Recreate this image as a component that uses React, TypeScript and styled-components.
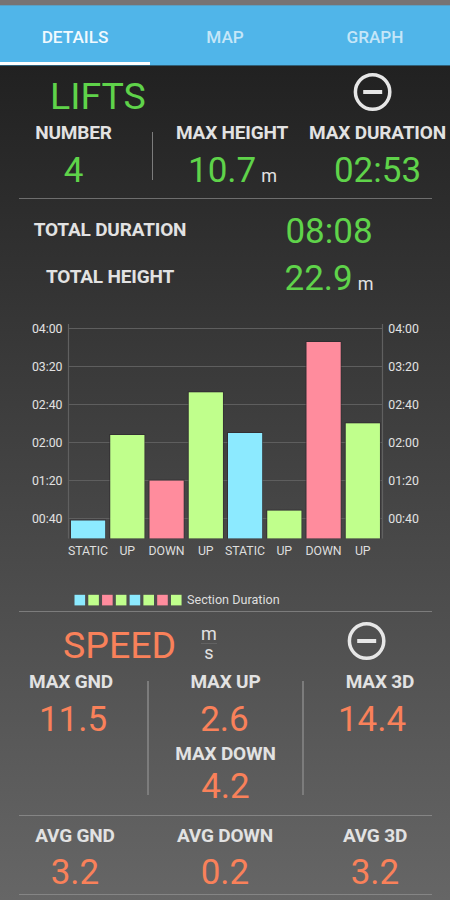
import React from "react";
import styled, { createGlobalStyle } from "styled-components";

const GREEN = "#5fd34a";
const ORANGE = "#f9815a";

const GlobalStyle = createGlobalStyle`
  *, *::before, *::after { box-sizing: border-box; }
  body { margin: 0; background: #666; }
`;

const Screen = styled.main`
  width: 450px;
  height: 900px;
  overflow: hidden;
  display: flex;
  flex-direction: column;
  font-family: Roboto, "Liberation Sans", sans-serif;
  color: #e2e2e2;
  background: linear-gradient(#212121 65px, #666666 900px);
`;

const StatusBar = styled.div`
  flex: none;
  height: 5px;
  background: #777374;
`;

const Tabs = styled.nav`
  flex: none;
  display: grid;
  grid-template-columns: repeat(3, 1fr);
  height: 61px;
  background: #50b5e9;
  border-top: 1px solid #5a9fc4;
  border-bottom: 1px solid #2f5f78;
`;

const Tab = styled.button<{ $active?: boolean }>`
  border: 0;
  border-bottom: 3px solid ${(p) => (p.$active ? "#ffffff" : "transparent")};
  padding: 5px 0 0;
  background: none;
  font: 500 17.2px/20px Roboto, "Liberation Sans", sans-serif;
  color: ${(p) => (p.$active ? "#f0f9fe" : "#c5e6f8")};
`;

const Header = styled.header<{ $height: number }>`
  flex: none;
  display: flex;
  align-items: center;
  height: ${(p) => p.$height}px;
`;

const Title = styled.h1<{ $color: string; $left: number; $width: number; $top: number }>`
  margin: ${(p) => p.$top}px 0 0 ${(p) => p.$left}px;
  width: ${(p) => p.$width}px;
  font-size: 37.5px;
  line-height: 40px;
  font-weight: 400;
  white-space: nowrap;
  color: ${(p) => p.$color};
`;

const Fraction = styled.div`
  width: 18px;
  margin-top: 4px;
  display: flex;
  flex-direction: column;
  align-items: center;
  font-size: 18px;
  line-height: 18px;
`;

const Numerator = styled.span`
  border-bottom: 1px solid #626262;
`;

const CollapseButton = styled.button<{ $right: number; $bottom?: number }>`
  display: flex;
  margin: 0 ${(p) => p.$right}px ${(p) => p.$bottom ?? 0}px auto;
  padding: 0;
  border: 0;
  background: none;
`;

const Stats = styled.section<{ $columns: string }>`
  flex: none;
  display: grid;
  grid-template-columns: ${(p) => p.$columns};
`;

const Stat = styled.div`
  display: flex;
  flex-direction: column;
  align-items: center;
`;

const Label = styled.div<{ $height: number; $shift?: number }>`
  height: ${(p) => p.$height}px;
  line-height: ${(p) => p.$height}px;
  font-size: 19px;
  font-weight: 700;
  white-space: nowrap;
  letter-spacing: -0.17px;
  transform: translateX(${(p) => p.$shift ?? 0}px);
`;

const Value = styled.div<{ $color: string; $height: number; $shift?: number }>`
  height: ${(p) => p.$height}px;
  line-height: ${(p) => p.$height + 2}px;
  font-size: 35px;
  white-space: nowrap;
  color: ${(p) => p.$color};
  transform: translateX(${(p) => p.$shift ?? 0}px);
`;

const Unit = styled.span`
  margin-left: 5px;
  font-size: 18px;
  color: #e2e2e2;
`;

const Divider = styled.div<{ $top: number; $bottom: number }>`
  margin: ${(p) => p.$top}px 0 ${(p) => p.$bottom}px;
  background: #7c7c7c;
`;

const Rule = styled.hr<{ $before?: number; $after?: number; $color?: string }>`
  flex: none;
  width: 413px;
  height: 1px;
  border: 0;
  margin: ${(p) => p.$before ?? 0}px 0 ${(p) => p.$after ?? 0}px 19px;
  background: ${(p) => p.$color ?? "#858585"};
`;

const TotalRow = styled.div`
  flex: none;
  display: grid;
  grid-template-columns: 220px 218px;
  justify-items: center;
  align-items: start;
  height: 47px;
`;

const Chart = styled.svg`
  flex: none;
  display: block;
  font-family: Roboto, "Liberation Sans", sans-serif;
  font-size: 12.3px;
`;

const MinusCircle = () => (
  <svg width="40" height="40" viewBox="0 0 40 40" fill="none">
    <circle cx="19.6" cy="20" r="17.2" stroke="#e6e6e6" strokeWidth="3.5" />
    <path d="M10.2 20h19" stroke="#e6e6e6" strokeWidth="4" />
  </svg>
);

const BLUE = "#8ceaff";
const LIME = "#c0ff8c";
const PINK = "#ff8c9d";

const bars = [
  { label: "STATIC", top: 219.5, color: BLUE },
  { label: "UP", top: 134, color: LIME },
  { label: "DOWN", top: 179.6, color: PINK },
  { label: "UP", top: 91.3, color: LIME },
  { label: "STATIC", top: 132, color: BLUE },
  { label: "UP", top: 209.6, color: LIME },
  { label: "DOWN", top: 41, color: PINK },
  { label: "UP", top: 122.3, color: LIME },
];
const ticks = ["04:00", "03:20", "02:40", "02:00", "01:20", "00:40"];
const BASE = 237.4;

const DurationChart = () => (
  <Chart width="450" height="310" viewBox="0 0 450 310">
    {ticks.map((t, i) => {
      const y = 27.5 + i * 38;
      return (
        <g key={t}>
          <path d={`M68 ${y}H383`} stroke="#5e5e5e" strokeWidth="1.2" />
          <text x="62.5" y={y + 4} textAnchor="end" fill="#e2e2e2">{t}</text>
          <text x="388.3" y={y + 4} fill="#e2e2e2">{t}</text>
        </g>
      );
    })}
    <path d="M68.5 23V237.5M382.5 23V237.5" stroke="#606060" strokeWidth="1.2" />
    {bars.map((b, i) => {
      const x = 71 + i * 39.25;
      return (
        <g key={i}>
          <rect x={x - 1} y={b.top - 1} width="36" height={BASE - b.top + 1} fill="#2b262b" opacity="0.6" />
          <rect x={x} y={b.top} width="34.2" height={BASE - b.top} fill={b.color} />
          <text x={x + 17} y="254" textAnchor="middle" fill="#dedede">{b.label}</text>
          <rect x={74.5 + i * 13.78} y="293.8" width="10.6" height="10.6" fill={b.color} />
        </g>
      );
    })}
    <text x="187" y="303.4" fontSize="12.6" fill="#dedede">Section Duration</text>
  </Chart>
);

export default function App() {
  return (
    <>
      <GlobalStyle />
      <Screen>
        <StatusBar />
        <Tabs>
          <Tab $active>DETAILS</Tab>
          <Tab>MAP</Tab>
          <Tab>GRAPH</Tab>
        </Tabs>

        <Header $height={53}>
          <Title $color={GREEN} $left={50} $width={110} $top={6}>LIFTS</Title>
          <CollapseButton $right={57} $bottom={2} aria-label="Collapse lifts"><MinusCircle /></CollapseButton>
        </Header>
        <Stats $columns="152px 1px 152px 145px">
          <Stat>
            <Label $height={28} $shift={-2.5}>NUMBER</Label>
            <Value $color={GREEN} $height={46} $shift={-2.5}>4</Value>
          </Stat>
          <Divider $top={13} $bottom={13} />
          <Stat>
            <Label $height={28} $shift={3}>MAX HEIGHT</Label>
            <Value $color={GREEN} $height={46} $shift={3.5}>10.7<Unit>m</Unit></Value>
          </Stat>
          <Stat>
            <Label $height={28}>MAX DURATION</Label>
            <Value $color={GREEN} $height={46}>02:53</Value>
          </Stat>
        </Stats>
        <Rule $before={5} $after={8} $color="#6e6e6e" />

        <TotalRow>
          <Label $height={45}>TOTAL DURATION</Label>
          <Value $color={GREEN} $height={47}>08:08</Value>
        </TotalRow>
        <TotalRow>
          <Label $height={45}>TOTAL HEIGHT</Label>
          <Value $color={GREEN} $height={47}>22.9<Unit>m</Unit></Value>
        </TotalRow>
        <DurationChart />
        <Rule $color="#7c7c7c" />

        <Header $height={58}>
          <Title $color={ORANGE} $left={63} $width={137} $top={8}>SPEED</Title>
          <Fraction><Numerator>m</Numerator><span>s</span></Fraction>
          <CollapseButton $right={63} aria-label="Collapse speed"><MinusCircle /></CollapseButton>
        </Header>
        <Stats $columns="147px 2px 153px 2px 146px">
          <Stat>
            <Label $height={24} $shift={-2.5}>MAX GND</Label>
            <Value $color={ORANGE} $height={50} $shift={-0.5}>11.5</Value>
          </Stat>
          <Divider $top={11} $bottom={13} />
          <Stat>
            <Label $height={24}>MAX UP</Label>
            <Value $color={ORANGE} $height={50} $shift={-1}>2.6</Value>
            <Label $height={20}>MAX DOWN</Label>
            <Value $color={ORANGE} $height={44}>4.2</Value>
          </Stat>
          <Divider $top={11} $bottom={13} />
          <Stat>
            <Label $height={24} $shift={3}>MAX 3D</Label>
            <Value $color={ORANGE} $height={50} $shift={-5}>14.4</Value>
          </Stat>
        </Stats>
        <Rule $before={7} />
        <Stats $columns="repeat(3, 1fr)">
          <Stat>
            <Label $height={39}>AVG GND</Label>
            <Value $color={ORANGE} $height={34}>3.2</Value>
          </Stat>
          <Stat>
            <Label $height={39}>AVG DOWN</Label>
            <Value $color={ORANGE} $height={34}>0.2</Value>
          </Stat>
          <Stat>
            <Label $height={39}>AVG 3D</Label>
            <Value $color={ORANGE} $height={34}>3.2</Value>
          </Stat>
        </Stats>
        <Rule $before={5} />
      </Screen>
    </>
  );
}
